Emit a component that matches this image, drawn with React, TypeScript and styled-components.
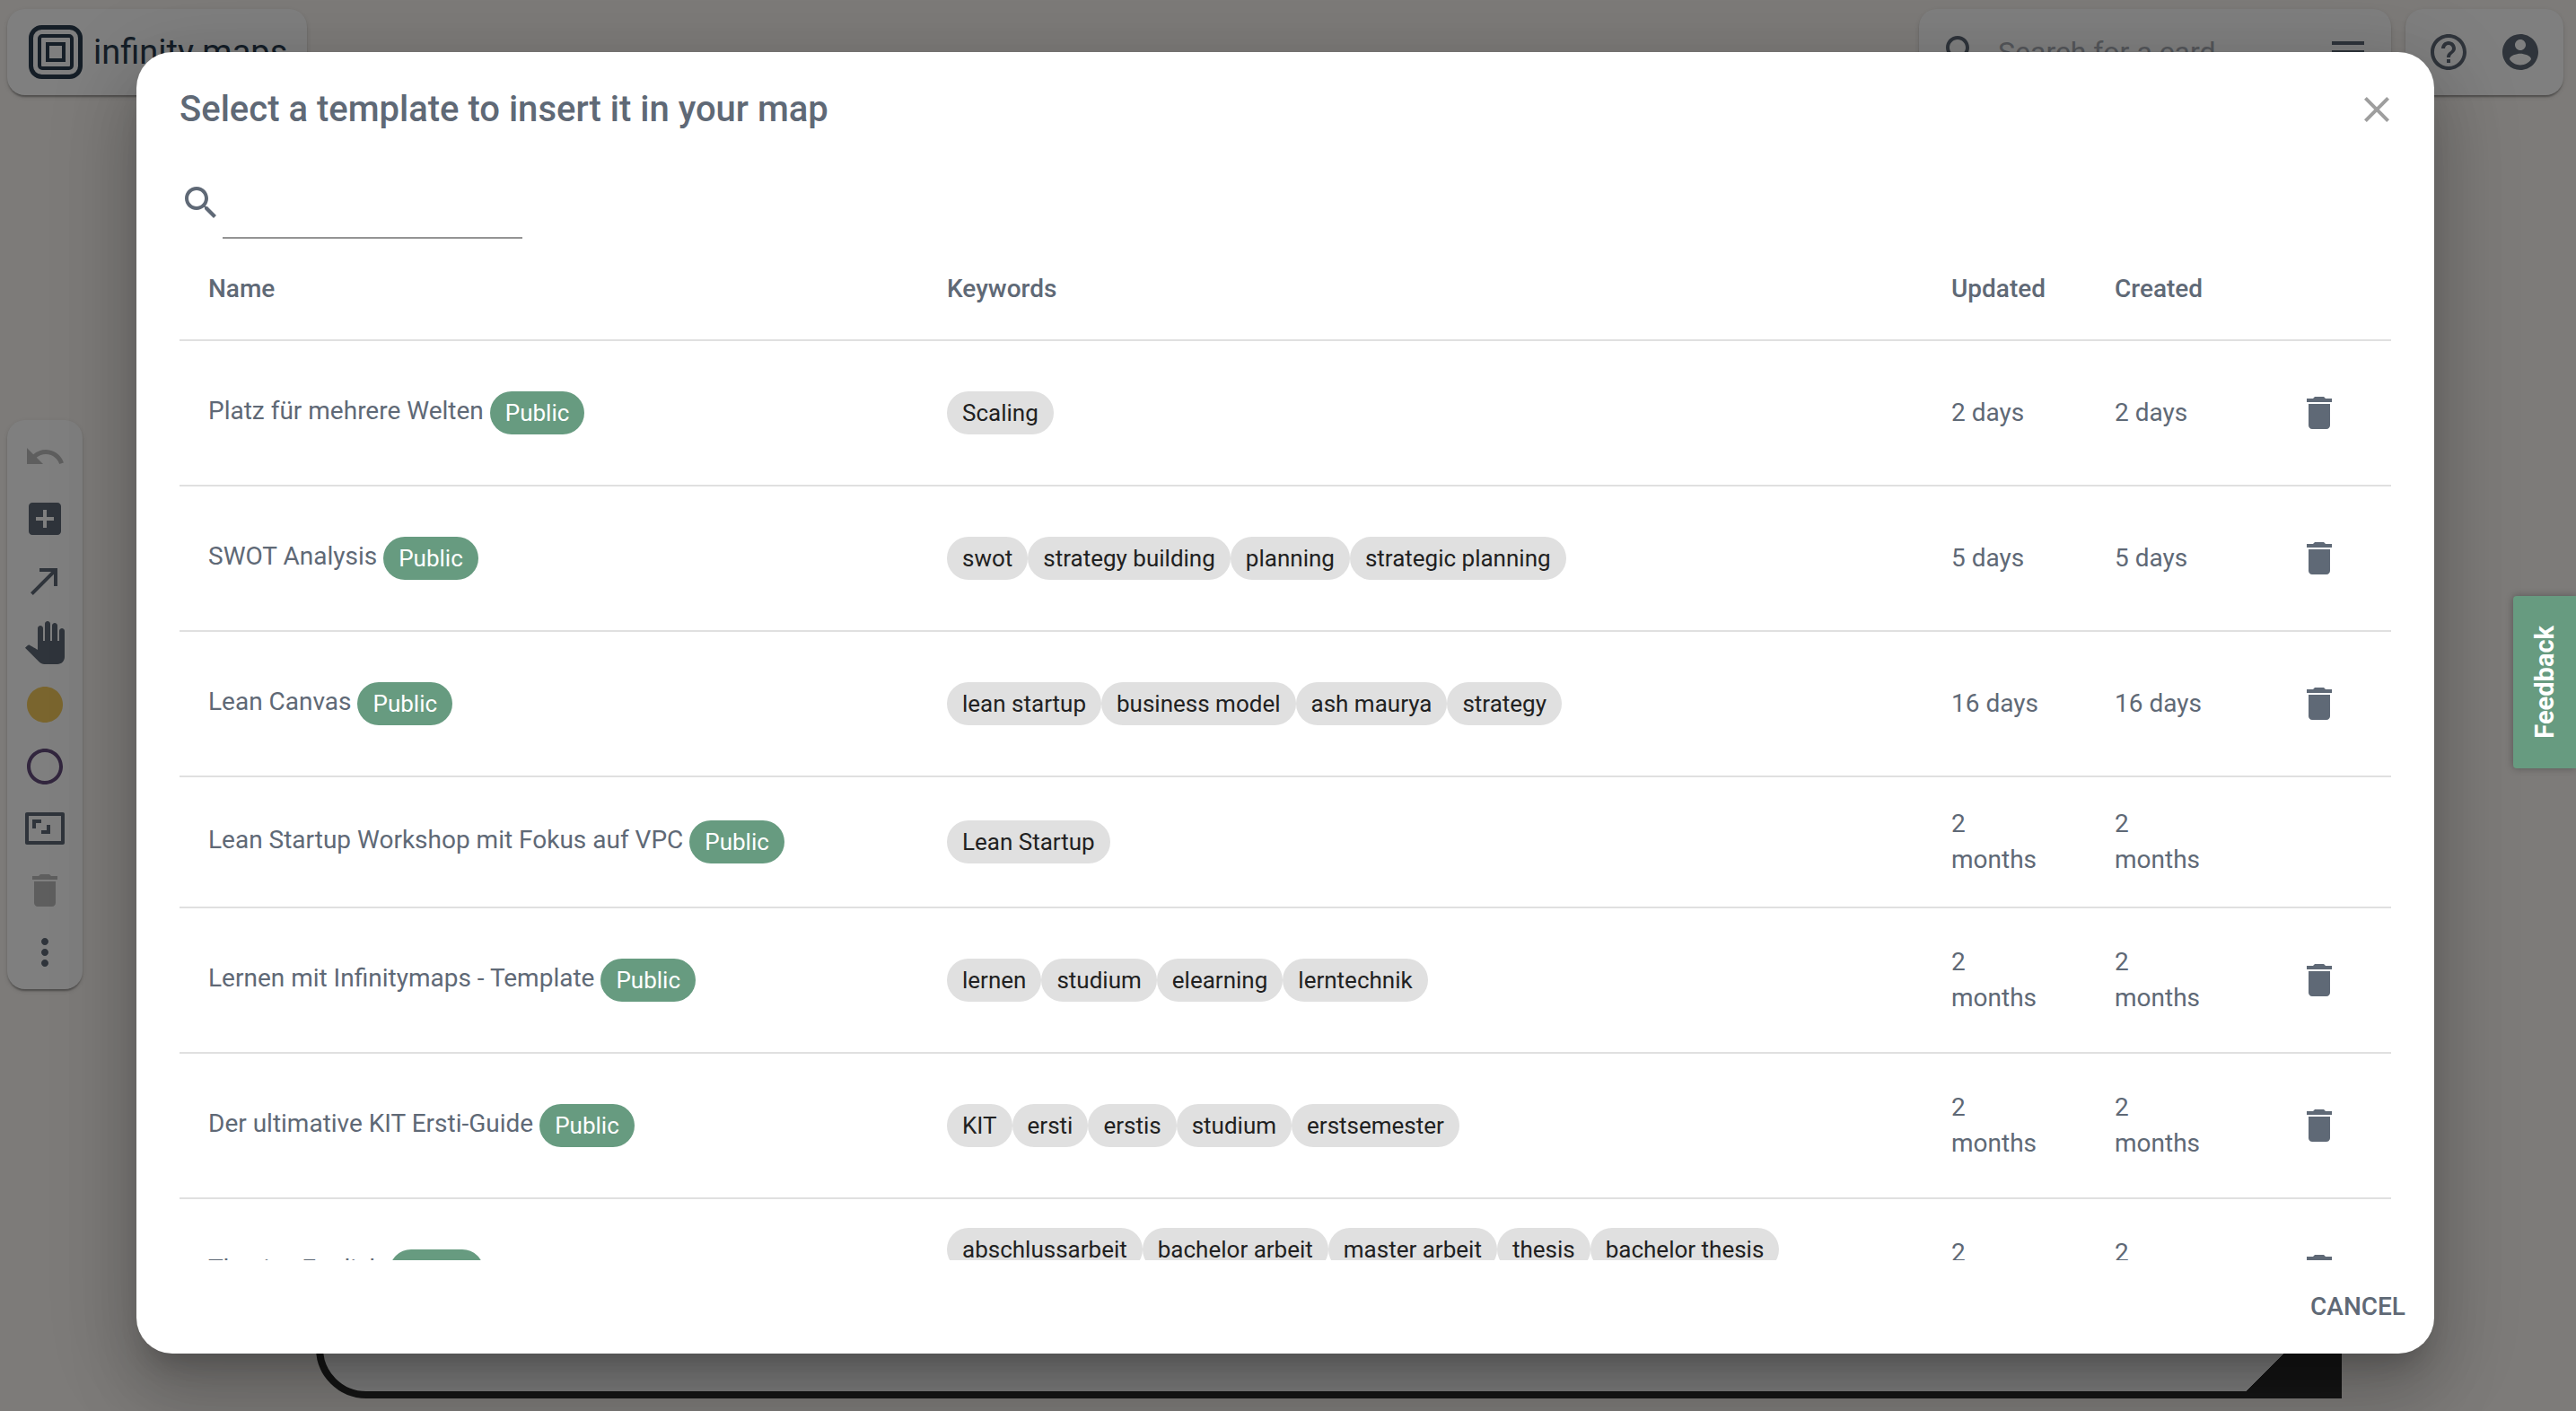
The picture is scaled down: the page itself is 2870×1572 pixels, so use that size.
import React from "react";
import styled, { createGlobalStyle, css } from "styled-components";

const SLATE = "#5f6976";
const GREEN = "#679b80";

const GlobalStyle = createGlobalStyle`
  *, *::before, *::after { box-sizing: border-box; }
  body {
    margin: 0;
    font-family: Roboto, "Liberation Sans", sans-serif;
    font-size: 28px;
    line-height: 40px;
    color: ${SLATE};
    background: #fbf7f3;
  }
  button, input { font: inherit; color: inherit; }
`;

const Page = styled.div`
  position: relative;
  height: 100vh;
  overflow: hidden;
`;

const MapCanvas = styled.div`
  position: absolute;
  inset: 0;
`;

const MapCard = styled.div`
  position: absolute;
  left: 352px;
  right: 261px;
  top: 120px;
  bottom: 14px;
  overflow: hidden;
  border: 8px solid #2b2b2b;
  border-radius: 56px 56px 0 56px;
  background: #fdfdfd;
`;

const ResizeCorner = styled.span`
  position: absolute;
  right: 0;
  bottom: 0;
  width: 98px;
  height: 98px;
  background: linear-gradient(135deg, transparent 50%, #2b2b2b 50%);
`;

const Chrome = styled.div`
  position: relative;
  display: flex;
  flex-direction: column;
  height: 100%;
  padding: 10px 14px 10px 8px;
`;

const TopBar = styled.header`
  display: flex;
  gap: 16px;
  align-items: stretch;
  height: 96px;
`;

const floating = css`
  background: #fff;
  border-radius: 20px;
  box-shadow: 0 4px 2px -2px rgba(0, 0, 0, 0.2), 0 2px 2px 0 rgba(0, 0, 0, 0.14),
    0 2px 6px 0 rgba(0, 0, 0, 0.12);
`;

const Brand = styled.a`
  ${floating}
  display: flex;
  align-items: center;
  gap: 12px;
  padding: 0 22px 0 24px;
  margin-right: auto;
  color: #2b3c4e;
  font-size: 38px;
  text-decoration: none;
`;

const SearchBox = styled.div`
  ${floating}
  display: flex;
  align-items: center;
  gap: 16px;
  width: 526px;
  padding: 0 24px;
`;

const SearchInput = styled.input`
  flex: 1;
  min-width: 0;
  padding: 0;
  border: 0;
  outline: 0;
  background: none;
  font-size: 32px;
  &::placeholder { color: #a8adb4; opacity: 1; }
`;

const Account = styled.nav`
  ${floating}
  display: flex;
  align-items: center;
  gap: 32px;
  padding: 0 24px;
`;

const ToolsArea = styled.div`
  display: flex;
  flex: 1;
  padding-bottom: 98px;
`;

const Tools = styled.nav`
  ${floating}
  display: flex;
  flex-direction: column;
  align-items: center;
  gap: 21px;
  width: 84px;
  margin: auto 0;
  padding: 17px 0;
`;

const IconButton = styled.button<{ $pad?: number; $tone?: string }>`
  display: flex;
  padding: ${(p) => p.$pad ?? 0}px;
  border: 0;
  border-radius: 50%;
  background: none;
  color: ${(p) => p.$tone ?? SLATE};
  cursor: pointer;
`;

const Overlay = styled.div`
  position: absolute;
  inset: 0;
  display: flex;
  justify-content: center;
  padding: 58px 6px 64px 0;
  background: rgba(0, 0, 0, 0.5);
`;

const Dialog = styled.section`
  display: flex;
  flex-direction: column;
  width: 100%;
  max-width: 2560px;
  border-radius: 40px;
  background: #fff;
  box-shadow: 0 22px 30px -14px rgba(0, 0, 0, 0.2), 0 48px 76px 6px rgba(0, 0, 0, 0.14),
    0 18px 92px 16px rgba(0, 0, 0, 0.12);
`;

const DialogHead = styled.header`
  display: flex;
  align-items: center;
  justify-content: space-between;
  padding: 32px 40px 32px 48px;
`;

const Title = styled.h2`
  margin: 0;
  font-size: 40px;
  font-weight: 500;
  line-height: 64px;
`;

const DialogBody = styled.div`
  flex: 1;
  min-height: 0;
  padding: 16px 48px 0;
  overflow-y: auto;
  scrollbar-width: none;
`;

const Filter = styled.label`
  display: flex;
  align-items: flex-start;
`;

const FilterInput = styled.input`
  width: 334px;
  height: 64px;
  padding: 8px 0;
  border: 0;
  border-bottom: 2px solid #949494;
  border-radius: 0;
  outline: 0;
  background: none;
  font-size: 32px;
`;

const Table = styled.table`
  width: 100%;
  table-layout: fixed;
  border-collapse: separate;
  border-spacing: 0;
`;

const Col = styled.col<{ $width?: string }>`
  width: ${(p) => p.$width ?? "auto"};
`;

const Th = styled.th`
  padding: 32px;
  border-bottom: 2px solid #e0e0e0;
  font-weight: 500;
  line-height: 48px;
  text-align: left;
`;

const Td = styled.td`
  padding: 32px;
  border-bottom: 2px solid #e0e0e0;
  vertical-align: middle;
`;

const AgeCell = styled(Td)`
  padding-right: 40px;
`;

const Chip = styled.span<{ $public?: boolean }>`
  display: inline-flex;
  align-items: center;
  height: 48px;
  padding: 0 17px;
  border-radius: 24px;
  background: ${(p) => (p.$public ? GREEN : "#e0e0e0")};
  color: ${(p) => (p.$public ? "#fff" : "#212121")};
  font-size: 26px;
  vertical-align: middle;
  white-space: nowrap;
`;

const ChipRow = styled.div`
  display: flex;
  flex-wrap: wrap;
`;

const DialogFoot = styled.footer`
  display: flex;
  justify-content: flex-end;
  padding: 16px;
`;

const TextButton = styled.button`
  height: 72px;
  padding: 0 16px;
  border: 0;
  background: none;
  font-weight: 500;
  text-transform: uppercase;
  cursor: pointer;
`;

const Feedback = styled.button`
  position: absolute;
  top: 664px;
  right: 0;
  width: 70px;
  height: 192px;
  padding: 0;
  border: 0;
  border-radius: 4px 0 0 4px;
  background: ${GREEN};
  color: #fff;
  font-size: 29px;
  font-weight: 700;
  writing-mode: sideways-lr;
  box-shadow: 0 0 8px rgba(0, 0, 0, 0.3);
  cursor: pointer;
`;

const icons = {
  search:
    "M15.5 14h-.79l-.28-.27C15.41 12.59 16 11.11 16 9.5 16 5.91 13.09 3 9.5 3S3 5.91 3 9.5 5.91 16 9.5 16c1.61 0 3.09-.59 4.23-1.57l.27.28v.79l5 4.99L20.49 19l-4.99-5zm-6 0C7.01 14 5 11.99 5 9.5S7.01 5 9.5 5 14 7.01 14 9.5 11.99 14 9.5 14z",
  menu: "M3 18h18v-2H3v2zm0-5h18v-2H3v2zm0-7v2h18V6H3z",
  help: "M11 18h2v-2h-2v2zm1-16C6.48 2 2 6.48 2 12s4.48 10 10 10 10-4.48 10-10S17.52 2 12 2zm0 18c-4.41 0-8-3.59-8-8s3.59-8 8-8 8 3.59 8 8-3.59 8-8 8zm0-14c-2.21 0-4 1.79-4 4h2c0-1.1.9-2 2-2s2 .9 2 2c0 2-3 1.75-3 5h2c0-2.25 3-2.5 3-5 0-2.21-1.79-4-4-4z",
  account:
    "M12 2C6.48 2 2 6.48 2 12s4.48 10 10 10 10-4.48 10-10S17.52 2 12 2zm0 3c1.66 0 3 1.34 3 3s-1.34 3-3 3-3-1.34-3-3 1.34-3 3-3zm0 14.2c-2.5 0-4.71-1.28-6-3.22.03-1.99 4-3.08 6-3.08 1.99 0 5.97 1.09 6 3.08-1.29 1.94-3.5 3.22-6 3.22z",
  close:
    "M19 6.41L17.59 5 12 10.59 6.41 5 5 6.41 10.59 12 5 17.59 6.41 19 12 13.41 17.59 19 19 17.59 13.41 12z",
  undo: "M12.5 8c-2.65 0-5.05.99-6.9 2.6L2 7v9h9l-3.62-3.62c1.39-1.16 3.16-1.88 5.12-1.88 3.54 0 6.55 2.31 7.6 5.5l2.37-.78C21.08 11.03 17.15 8 12.5 8z",
  add: "M19 3H5c-1.11 0-2 .9-2 2v14c0 1.1.89 2 2 2h14c1.1 0 2-.9 2-2V5c0-1.1-.9-2-2-2zm-2 10h-4v4h-2v-4H7v-2h4V7h2v4h4v2z",
  arrow: "M9 5v2h6.59L4 18.59 5.41 20 17 8.41V15h2V5H9z",
  hand: "M23 5.5V20c0 2.2-1.8 4-4 4h-7.3c-1.08 0-2.1-.43-2.85-1.19L1 14.83s1.26-1.23 1.3-1.25c.22-.19.49-.29.79-.29.22 0 .42.06.6.16.04.01 4.31 2.46 4.31 2.46V4c0-.83.67-1.5 1.5-1.5S11 3.17 11 4v7h1V1.5c0-.83.67-1.5 1.5-1.5S15 .67 15 1.5V11h1V2.5c0-.83.67-1.5 1.5-1.5s1.5.67 1.5 1.5V11h1V5.5c0-.83.67-1.5 1.5-1.5s1.5.67 1.5 1.5z",
  dot: "M12 2C6.47 2 2 6.47 2 12s4.47 10 10 10 10-4.47 10-10S17.53 2 12 2z",
  ring: "M12 2C6.48 2 2 6.48 2 12s4.48 10 10 10 10-4.48 10-10S17.52 2 12 2zm0 18c-4.42 0-8-3.58-8-8s3.58-8 8-8 8 3.58 8 8-3.58 8-8 8z",
  frame:
    "M22 3H2c-.6 0-1 .4-1 1v16c0 .6.4 1 1 1h20c.6 0 1-.4 1-1V4c0-.6-.4-1-1-1zm-1 16H3V5h18v14zM5 7h5v2H7v3H5V7zm10 8h-5v-2h3v-3h2v5z",
  trash: "M6 19c0 1.1.9 2 2 2h8c1.1 0 2-.9 2-2V7H6v12zM19 4h-3.5l-1-1h-5l-1 1H5v2h14V4z",
  more: "M12 8c1.1 0 2-.9 2-2s-.9-2-2-2-2 .9-2 2 .9 2 2 2zm0 2c-1.1 0-2 .9-2 2s.9 2 2 2 2-.9 2-2-.9-2-2-2zm0 6c-1.1 0-2 .9-2 2s.9 2 2 2 2-.9 2-2-.9-2-2-2z",
};

type IconName = keyof typeof icons;

const Icon = ({ name }: { name: IconName }) => (
  <svg width="48" height="48" viewBox="0 0 24 24" fill="currentColor" aria-hidden="true">
    <path d={icons[name]} />
  </svg>
);

const Logo = () => (
  <svg width="60" height="60" viewBox="0 0 60 60" fill="none" stroke="currentColor" aria-hidden="true">
    <rect x="2.5" y="2.5" width="55" height="55" rx="12" strokeWidth="5" />
    <rect x="12" y="12" width="36" height="36" rx="3" strokeWidth="4" />
    <rect x="21" y="21" width="18" height="18" strokeWidth="4" />
  </svg>
);

const tools: { icon: IconName; label: string; tone?: string }[] = [
  { icon: "undo", label: "Undo", tone: "#bdbdbd" },
  { icon: "add", label: "Add card" },
  { icon: "arrow", label: "Connect" },
  { icon: "hand", label: "Pan" },
  { icon: "dot", label: "Fill colour", tone: "#f4cb5c" },
  { icon: "ring", label: "Border colour", tone: "#644c7c" },
  { icon: "frame", label: "Fit to view" },
  { icon: "trash", label: "Delete", tone: "#bdbdbd" },
  { icon: "more", label: "More" },
];

interface Template {
  name: string;
  keywords: string[];
  age: string;
  removable: boolean;
}

const templates: Template[] = [
  { name: "Platz für mehrere Welten", keywords: ["Scaling"], age: "2 days", removable: true },
  {
    name: "SWOT Analysis",
    keywords: ["swot", "strategy building", "planning", "strategic planning"],
    age: "5 days",
    removable: true,
  },
  {
    name: "Lean Canvas",
    keywords: ["lean startup", "business model", "ash maurya", "strategy"],
    age: "16 days",
    removable: true,
  },
  {
    name: "Lean Startup Workshop mit Fokus auf VPC",
    keywords: ["Lean Startup"],
    age: "2 months",
    removable: false,
  },
  {
    name: "Lernen mit Infinitymaps - Template",
    keywords: ["lernen", "studium", "elearning", "lerntechnik"],
    age: "2 months",
    removable: true,
  },
  {
    name: "Der ultimative KIT Ersti-Guide",
    keywords: ["KIT", "ersti", "erstis", "studium", "erstsemester"],
    age: "2 months",
    removable: true,
  },
  {
    name: "Thesis - English",
    keywords: [
      "abschlussarbeit",
      "bachelor arbeit",
      "master arbeit",
      "thesis",
      "bachelor thesis",
      "master thesis",
    ],
    age: "2 months",
    removable: true,
  },
];

const TemplateRow = ({ template }: { template: Template }) => (
  <tr>
    <Td>
      {template.name} <Chip $public>Public</Chip>
    </Td>
    <Td>
      <ChipRow>
        {template.keywords.map((word) => (
          <Chip key={word}>{word}</Chip>
        ))}
      </ChipRow>
    </Td>
    <AgeCell>{template.age}</AgeCell>
    <AgeCell>{template.age}</AgeCell>
    <Td>
      {template.removable && (
        <IconButton $pad={24} aria-label={`Delete ${template.name}`}>
          <Icon name="trash" />
        </IconButton>
      )}
    </Td>
  </tr>
);

export default function App() {
  return (
    <Page>
      <GlobalStyle />
      <MapCanvas>
        <MapCard>
          <ResizeCorner />
        </MapCard>
      </MapCanvas>
      <Chrome>
        <TopBar>
          <Brand href="#">
            <Logo />
            infinity maps
          </Brand>
          <SearchBox>
            <Icon name="search" />
            <SearchInput aria-label="Search for a card" placeholder="Search for a card" />
            <IconButton aria-label="Menu">
              <Icon name="menu" />
            </IconButton>
          </SearchBox>
          <Account>
            <IconButton aria-label="Help">
              <Icon name="help" />
            </IconButton>
            <IconButton aria-label="Account">
              <Icon name="account" />
            </IconButton>
          </Account>
        </TopBar>
        <ToolsArea>
          <Tools>
            {tools.map((tool) => (
              <IconButton key={tool.icon} aria-label={tool.label} $tone={tool.tone}>
                <Icon name={tool.icon} />
              </IconButton>
            ))}
          </Tools>
        </ToolsArea>
      </Chrome>
      <Overlay>
        <Dialog role="dialog" aria-modal="true" aria-labelledby="dialog-title">
          <DialogHead>
            <Title id="dialog-title">Select a template to insert it in your map</Title>
            <IconButton $tone="#9e9e9e" aria-label="Close">
              <Icon name="close" />
            </IconButton>
          </DialogHead>
          <DialogBody>
            <Filter>
              <Icon name="search" />
              <FilterInput aria-label="Filter templates" />
            </Filter>
            <Table>
              <colgroup>
                <Col $width="823px" />
                <Col />
                <Col $width="182px" />
                <Col $width="180px" />
                <Col $width="160px" />
              </colgroup>
              <thead>
                <tr>
                  <Th>Name</Th>
                  <Th>Keywords</Th>
                  <Th>Updated</Th>
                  <Th>Created</Th>
                  <Th />
                </tr>
              </thead>
              <tbody>
                {templates.map((template) => (
                  <TemplateRow key={template.name} template={template} />
                ))}
              </tbody>
            </Table>
          </DialogBody>
          <DialogFoot>
            <TextButton>Cancel</TextButton>
          </DialogFoot>
        </Dialog>
      </Overlay>
      <Feedback>Feedback</Feedback>
    </Page>
  );
}
